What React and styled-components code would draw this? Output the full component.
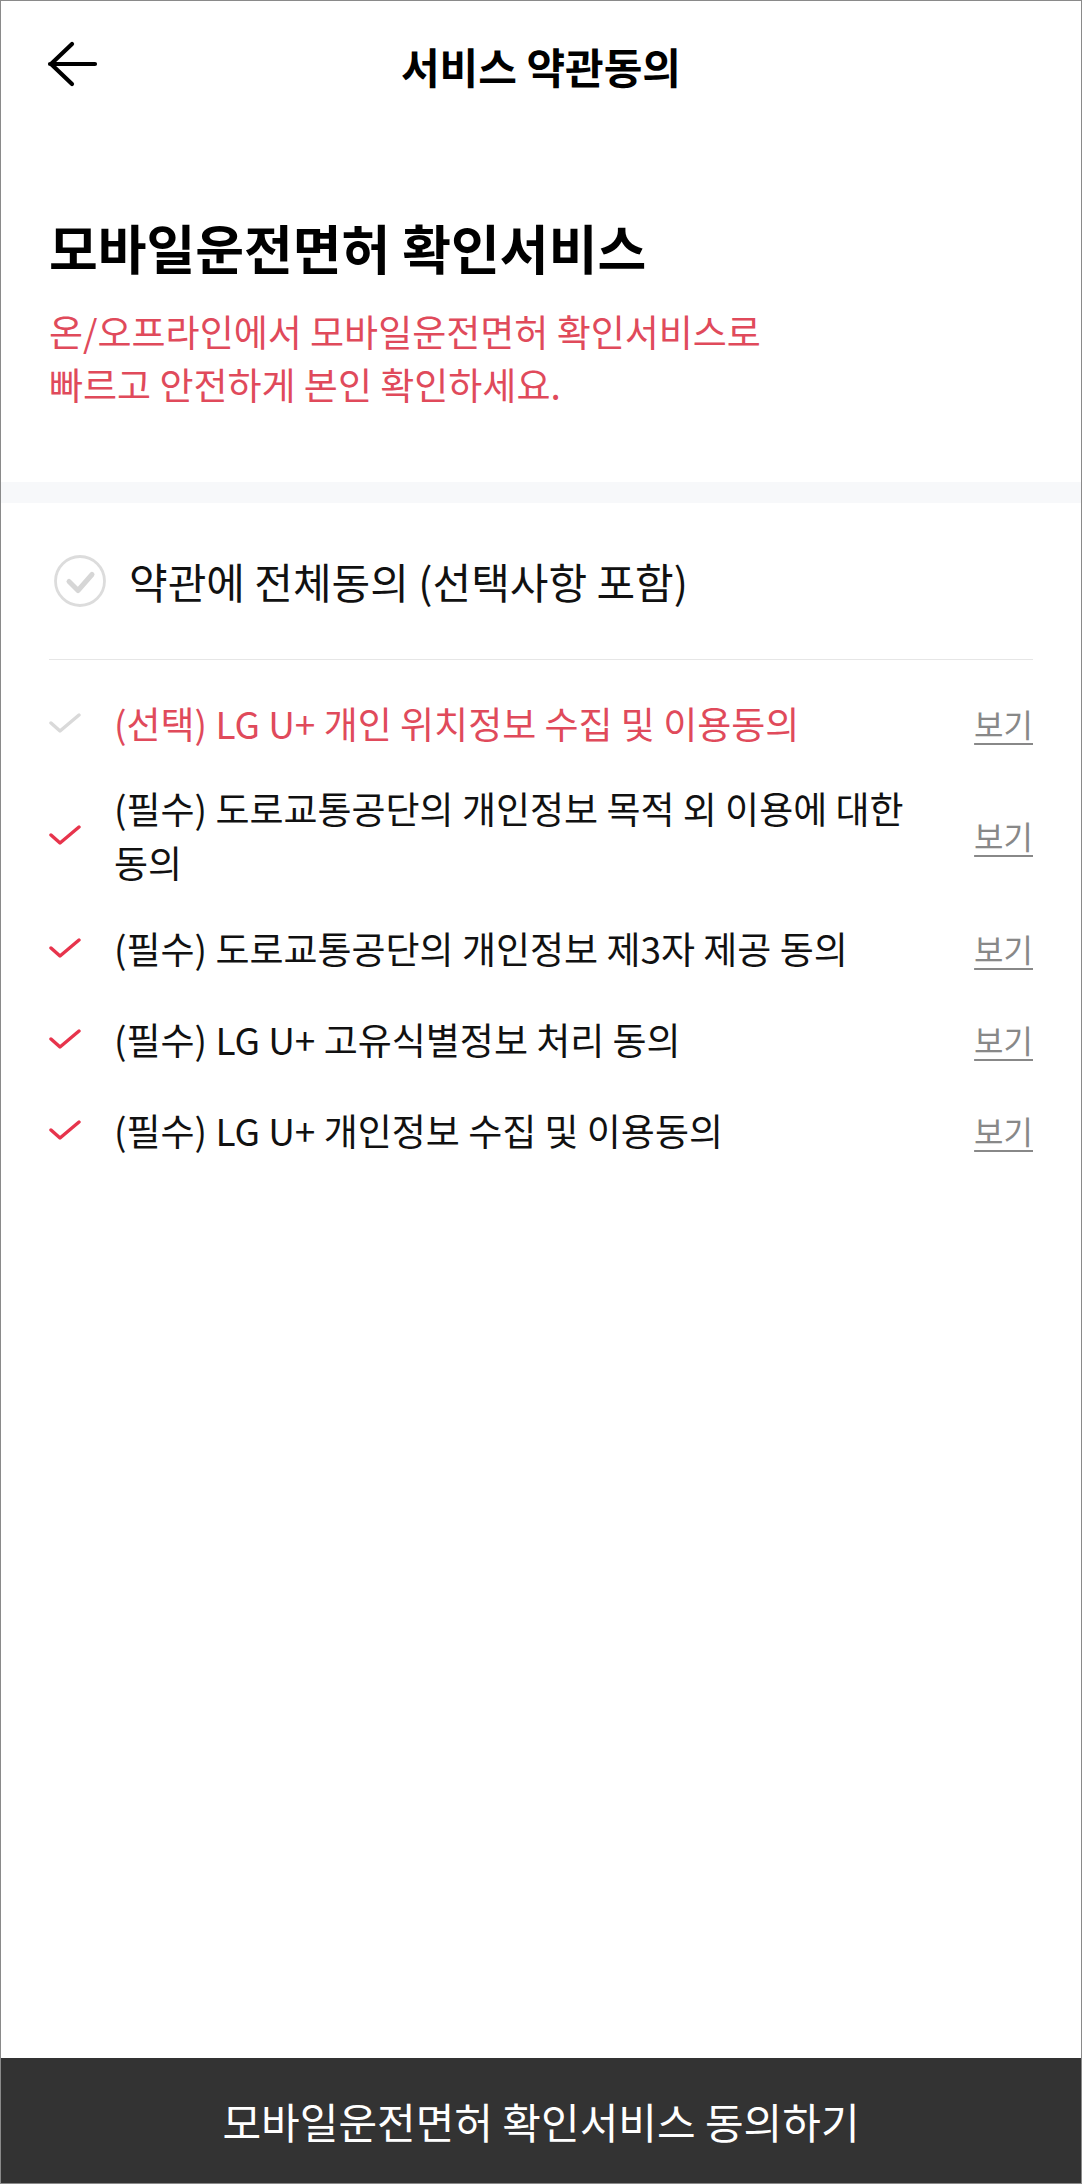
import React from "react";
import styled, { createGlobalStyle } from "styled-components";

const Global = createGlobalStyle`
  html, body { margin: 0; padding: 0; background: #fff; }
  body { font-family: "Noto Sans CJK KR", "Noto Sans", sans-serif; }
  * { box-sizing: border-box; }
`;

const Screen = styled.div`
  width: 1082px;
  min-height: 2184px;
  border: 1px solid #8a8a8a;
  display: flex;
  flex-direction: column;
  background: #fff;
  color: #111;
`;

const Header = styled.header`
  height: 130px;
  display: flex;
  align-items: center;
  justify-content: center;
  position: relative;
`;

const BackButton = styled.button`
  position: absolute;
  left: 44px;
  top: 38px;
  width: 56px;
  height: 52px;
  border: 0;
  padding: 0;
  background: none;
  display: flex;
  align-items: center;
  justify-content: center;
`;

const Title = styled.h1`
  margin: 0;
  font-size: 42px;
  line-height: 60px;
  font-weight: 700;
  color: #000;
`;

const Intro = styled.section`
  padding: 80px 48px 71px;
`;

const Heading = styled.h2`
  margin: 0 0 22px;
  font-size: 53px;
  line-height: 72px;
  font-weight: 700;
  color: #000;
`;

const Description = styled.p`
  margin: 0;
  font-size: 37px;
  line-height: 53px;
  color: #e04a5b;
`;

const Band = styled.div`
  height: 21px;
  background: #f7f8fa;
`;

const Terms = styled.section`
  padding: 0 48px;
`;

const AllAgree = styled.div`
  height: 157px;
  display: flex;
  align-items: center;
  gap: 23px;
  padding-left: 5px;
  border-bottom: 1px solid #e6e6e6;
`;

const AllLabel = styled.span`
  font-size: 42px;
  line-height: 60px;
  color: #111;
`;

const List = styled.ul`
  list-style: none;
  margin: 0;
  padding: 17px 0 0;
`;

const Row = styled.li`
  display: flex;
  align-items: center;
  min-height: 91px;
  padding: 13px 0;
`;

const CheckCell = styled.span`
  width: 65px;
  flex: none;
  display: flex;
  align-items: center;
`;

const RowText = styled.span`
  flex: 1;
  font-size: 37px;
  line-height: 54px;
  color: ${(p) => (p.$optional ? "#e04a5b" : "#111")};
  margin-right: 36px;
`;

const ViewLink = styled.a`
  flex: none;
  font-size: 32px;
  line-height: 44px;
  color: #888;
  text-decoration: underline;
  text-underline-offset: 6px;
  text-decoration-thickness: 2px;
`;

const Spacer = styled.div`
  flex: 1;
`;

const SubmitButton = styled.button`
  height: 125px;
  border: 0;
  background: #333;
  color: #fff;
  font-family: "Noto Sans CJK KR", "Noto Sans", sans-serif;
  font-size: 42px;
  padding: 0;
`;

const BackArrow = () => (
  <svg width="56" height="52" viewBox="0 0 56 52" fill="none">
    <path
      d="M5 25h45M27 5L6 25l21 20"
      stroke="#000"
      strokeWidth="4.2"
      strokeLinecap="round"
      strokeLinejoin="round"
    />
  </svg>
);

const CircleCheck = () => (
  <svg width="52" height="52" viewBox="0 0 52 52" fill="none">
    <circle cx="26" cy="26" r="24.5" stroke="#dcdcdc" strokeWidth="2.8" />
    <path
      d="M15 26.5l9 9 14-16"
      stroke="#d6d6d6"
      strokeWidth="5"
      strokeLinecap="round"
      strokeLinejoin="round"
    />
  </svg>
);

const Check = ({ color }) => (
  <svg width="32" height="22" viewBox="0 0 32 22" fill="none">
    <path
      d="M2 11l9 8L30 3"
      stroke={color}
      strokeWidth="3.4"
      strokeLinecap="round"
      strokeLinejoin="round"
    />
  </svg>
);

const items = [
  { text: "(선택) LG U+ 개인 위치정보 수집 및 이용동의", optional: true },
  { text: "(필수) 도로교통공단의 개인정보 목적 외 이용에 대한 동의" },
  { text: "(필수) 도로교통공단의 개인정보 제3자 제공 동의" },
  { text: "(필수) LG U+ 고유식별정보 처리 동의" },
  { text: "(필수) LG U+ 개인정보 수집 및 이용동의" },
];

export default function App() {
  return (
    <>
      <Global />
      <Screen>
        <Header>
          <BackButton aria-label="뒤로">
            <BackArrow />
          </BackButton>
          <Title>서비스 약관동의</Title>
        </Header>
        <Intro>
          <Heading>모바일운전면허 확인서비스</Heading>
          <Description>
            온/오프라인에서 모바일운전면허 확인서비스로
            <br />
            빠르고 안전하게 본인 확인하세요.
          </Description>
        </Intro>
        <Band />
        <Terms>
          <AllAgree>
            <CircleCheck />
            <AllLabel>약관에 전체동의 (선택사항 포함)</AllLabel>
          </AllAgree>
          <List>
            {items.map((it) => (
              <Row key={it.text}>
                <CheckCell>
                  <Check color={it.optional ? "#d9d9d9" : "#e7344c"} />
                </CheckCell>
                <RowText $optional={it.optional}>{it.text}</RowText>
                <ViewLink>보기</ViewLink>
              </Row>
            ))}
          </List>
        </Terms>
        <Spacer />
        <SubmitButton>모바일운전면허 확인서비스 동의하기</SubmitButton>
      </Screen>
    </>
  );
}
